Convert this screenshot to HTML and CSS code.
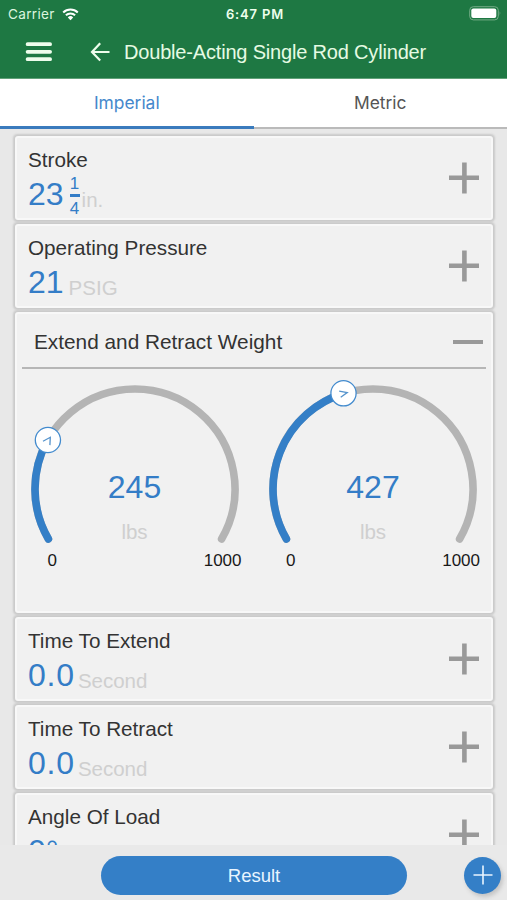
FILE: index.html
```
<!DOCTYPE html>
<html lang="en">
<head>
<meta charset="utf-8">
<meta name="viewport" content="width=device-width, initial-scale=1">
<title>Double-Acting Single Rod Cylinder</title>
<link rel="stylesheet" href="styles.css">
</head>
<body>
<div class="app">
  <header class="header">
    <div class="status">
      <div class="carrier"><span>Carrier</span>
        <svg class="wifi" width="17" height="13" viewBox="0 0 17 13"><path d="M1.2 4.5a10.4 10.4 0 0 1 14.6 0M3.9 7.3a6.5 6.5 0 0 1 9.2 0" fill="none" stroke="#fff" stroke-width="2"/><path d="M5.8 9.4a3.8 3.8 0 0 1 5.4 0L8.5 12.2z" fill="#fff"/></svg>
      </div>
      <span class="time">6:47 PM</span>
      <svg class="battery" width="33" height="15" viewBox="0 0 33 15"><rect x=".7" y=".7" width="28.6" height="13.2" rx="3.6" fill="none" stroke="#73ab86"/><rect x="2.3" y="2.4" width="25" height="9.6" rx="2" fill="#fff"/><path d="M30.7 5.2q1.5 2 0 4.2z" fill="#73ab86"/></svg>
    </div>
    <div class="toolbar">
      <svg class="menu" width="27" height="20" viewBox="0 0 27 20"><path d="M2.6 2.2h22.5M2.6 9.8h22.5M2.6 17.2h22.5" stroke="#eefdec" stroke-width="3.8" stroke-linecap="round"/></svg>
      <svg class="back" width="20" height="20" viewBox="0 0 20 20"><path d="M10.2 1.3 2 10l8.2 8.5M2 10h17.5" fill="none" stroke="#eefdec" stroke-width="2.2"/></svg>
      <h1 class="title">Double-Acting Single Rod Cylinder</h1>
    </div>
  </header>
  <nav class="tabs">
    <a class="tab active">Imperial</a>
    <a class="tab">Metric</a>
  </nav>
  <main class="list">
    <section class="card">
      <div class="info"><h2 class="label">Stroke</h2>
        <div class="reading"><span class="value">23</span><span class="fraction"><span class="num">1</span><span class="den">4</span></span><span class="unit">in.</span></div></div>
      <svg class="plus" width="30" height="32" viewBox="0 0 30 32"><path d="M0 15.7h30M15.4 .5v31" stroke="#999" stroke-width="4.6"/></svg>
    </section>
    <section class="card">
      <div class="info"><h2 class="label">Operating Pressure</h2>
        <div class="reading"><span class="value">21</span><span class="unit pressure">PSIG</span></div></div>
      <svg class="plus" width="30" height="32" viewBox="0 0 30 32"><path d="M0 15.7h30M15.4 .5v31" stroke="#999" stroke-width="4.6"/></svg>
    </section>
    <section class="card open">
      <div class="card-head"><h2 class="label weight">Extend and Retract Weight</h2><span class="minus"></span></div>
      <div class="gauges">
        <div class="gauge">
          <svg class="dial" width="216" height="176" viewBox="0 0 216 176"><path d="M21.4 163a100 100 0 1 1 173.2 0" fill="none" stroke="#b4b4b4" stroke-width="7.6" stroke-linecap="round"/><path d="M21.4 163A100 100 0 0 1 20.8 64" fill="none" stroke="#347fc7" stroke-width="7.6" stroke-linecap="round"/><circle cx="20.9" cy="64" r="12.6" fill="#fff" stroke="#438bce" stroke-width="1.3"/><path d="M16 65.3l7.3-4-.4 7.8" fill="none" stroke="#5593cc" stroke-width="1.3"/></svg>
          <div class="center"><span class="value">245</span><span class="unit">lbs</span></div>
          <div class="range"><span>0</span><span>1000</span></div>
        </div>
        <div class="gauge">
          <svg class="dial" width="216" height="176" viewBox="0 0 216 176"><path d="M21.4 163a100 100 0 1 1 173.2 0" fill="none" stroke="#b4b4b4" stroke-width="7.6" stroke-linecap="round"/><path d="M21.4 163A100 100 0 0 1 78.5 17.5" fill="none" stroke="#347fc7" stroke-width="7.6" stroke-linecap="round"/><circle cx="78.5" cy="17.3" r="12.6" fill="#fff" stroke="#438bce" stroke-width="1.3"/><path d="M74.2 15.2l8 1.4-6.5 4.6" fill="none" stroke="#5593cc" stroke-width="1.3"/></svg>
          <div class="center"><span class="value">427</span><span class="unit">lbs</span></div>
          <div class="range"><span>0</span><span>1000</span></div>
        </div>
      </div>
    </section>
    <section class="card">
      <div class="info"><h2 class="label">Time To Extend</h2>
        <div class="reading"><span class="value decimal">0.0</span><span class="unit second">Second</span></div></div>
      <svg class="plus" width="30" height="32" viewBox="0 0 30 32"><path d="M0 15.7h30M15.4 .5v31" stroke="#999" stroke-width="4.6"/></svg>
    </section>
    <section class="card">
      <div class="info"><h2 class="label">Time To Retract</h2>
        <div class="reading"><span class="value decimal">0.0</span><span class="unit second">Second</span></div></div>
      <svg class="plus" width="30" height="32" viewBox="0 0 30 32"><path d="M0 15.7h30M15.4 .5v31" stroke="#999" stroke-width="4.6"/></svg>
    </section>
    <section class="card">
      <div class="info"><h2 class="label">Angle Of Load</h2>
        <div class="reading"><span class="value">0°</span></div></div>
      <svg class="plus" width="30" height="32" viewBox="0 0 30 32"><path d="M0 15.7h30M15.4 .5v31" stroke="#999" stroke-width="4.6"/></svg>
    </section>
  </main>
  <footer class="footer">
    <button class="result">Result</button>
    <button class="add" aria-label="Add"><svg width="20" height="20" viewBox="0 0 20 20"><path d="M.5 10h19M10 .5v19" stroke="#e9f5ff" stroke-width="1.6"/></svg></button>
  </footer>
</div>
</body>
</html>
```
FILE: styles.css
```
* { box-sizing: border-box; }
body { margin: 0; font-family: "Liberation Sans", Arial, sans-serif; }
h1, h2 { margin: 0; font-weight: 400; }
svg { display: block; flex: none; }
.app { width: 507px; height: 900px; display: flex; flex-direction: column; background: #e8e8e8; overflow: hidden; }

.header { height: 79px; flex: none; background: #1e7843; border-bottom: 1px solid #60a178; }
.status { height: 28px; display: grid; grid-template-columns: 1fr auto 1fr; align-items: center; padding: 0 5px 0 8px; font-family: Inter, sans-serif; font-size: 13.6px; color: #dcf5df; }
.carrier { display: flex; align-items: center; gap: 7px; }
.carrier span { letter-spacing: .3px; }
.time { font-weight: 600; font-size: 13px; letter-spacing: .85px; color: #edffed; }
.battery { justify-self: end; margin: -1px 0 0 0; }
.toolbar { height: 50px; display: flex; align-items: center; padding: 0 0 2px 25px; }
.back { margin-left: 38px; }
.title { margin-left: 14px; font-size: 20px; letter-spacing: -.18px; color: #e6fbe3; white-space: nowrap; }

.tabs { height: 50px; flex: none; display: flex; background: #fff; }
.tab { flex: 1; display: flex; align-items: center; justify-content: center; padding-bottom: 1px; font-family: Inter, sans-serif; font-size: 17.4px; color: #555; border-bottom: 2px solid #bababa; }
.tab.active { padding-bottom: 0; color: #4588cc; border-bottom: 3px solid #3a7bbd; }

.list { flex: 1; min-height: 0; overflow: hidden; display: flex; flex-direction: column; gap: 4px; padding: 7px 14px 0 15px; }
.card { height: 84px; flex: none; display: flex; justify-content: space-between; padding: 10px 12px 0 11px; background: #f1f1f1; border: 2px solid #f8f8f8; border-radius: 3px; box-shadow: 0 0 2px 1.5px #cacaca; }
.label { font-size: 20.7px; line-height: 23px; color: #333; white-space: nowrap; }
.reading { display: flex; height: 40px; align-items: baseline; margin-top: 3px; }
.value { font-size: 32px; line-height: 40px; color: #347dc7; }
.decimal { letter-spacing: .8px; }
.unit { font-size: 20.5px; color: #cfcfcf; }
.reading .unit { align-self: flex-start; line-height: 24px; margin-top: 14px; }
.reading .pressure { margin-left: 5px; }
.reading .second { margin-left: 3px; }
.fraction { align-self: flex-start; display: flex; flex-direction: column; width: 10px; margin: 1px 2px 0 6px; font-size: 17px; line-height: 18px; text-align: center; color: #347dc7; }
.num { border-bottom: 3px solid #347dc7; height: 22px; }
.den { margin-top: 3px; }
.plus { margin-top: 14px; }

.open { height: 301px; display: block; padding: 0 5px; }
.card-head { height: 55px; display: flex; align-items: center; justify-content: space-between; padding: 2px 3px 0 12px; border-bottom: 2px solid #b6b6b6; }
.weight { font-size: 20.8px; }
.minus { width: 30px; height: 4px; background: #999; }
.gauges { display: flex; gap: 22.5px; padding: 7px 0 0 4.5px; }
.gauge { display: grid; width: 216px; flex: none; }
.dial, .center { grid-area: 1 / 1; }
.center { display: flex; flex-direction: column; align-items: center; padding-top: 91px; }
.center .unit { line-height: 24px; margin-top: 13px; }
.range { display: flex; justify-content: space-between; margin: -1px 1px 0 21px; font-size: 17px; line-height: 20px; color: #191919; }

.footer { height: 55px; flex: none; display: flex; align-items: center; padding: 5px 5px 0 101px; background: #e9e9e9; z-index: 1; }
.footer button { border: 0; padding: 0; font: inherit; color: #e9f5ff; background: #347fc7; }
.footer .result { width: 306px; height: 39px; border-radius: 20px; font-size: 18.5px; padding-top: 1px; }
.footer .add { width: 37px; height: 37px; margin-left: 57px; border-radius: 50%; display: grid; place-items: center; box-shadow: 2px 3px 4px #c4c4c4; }
```
